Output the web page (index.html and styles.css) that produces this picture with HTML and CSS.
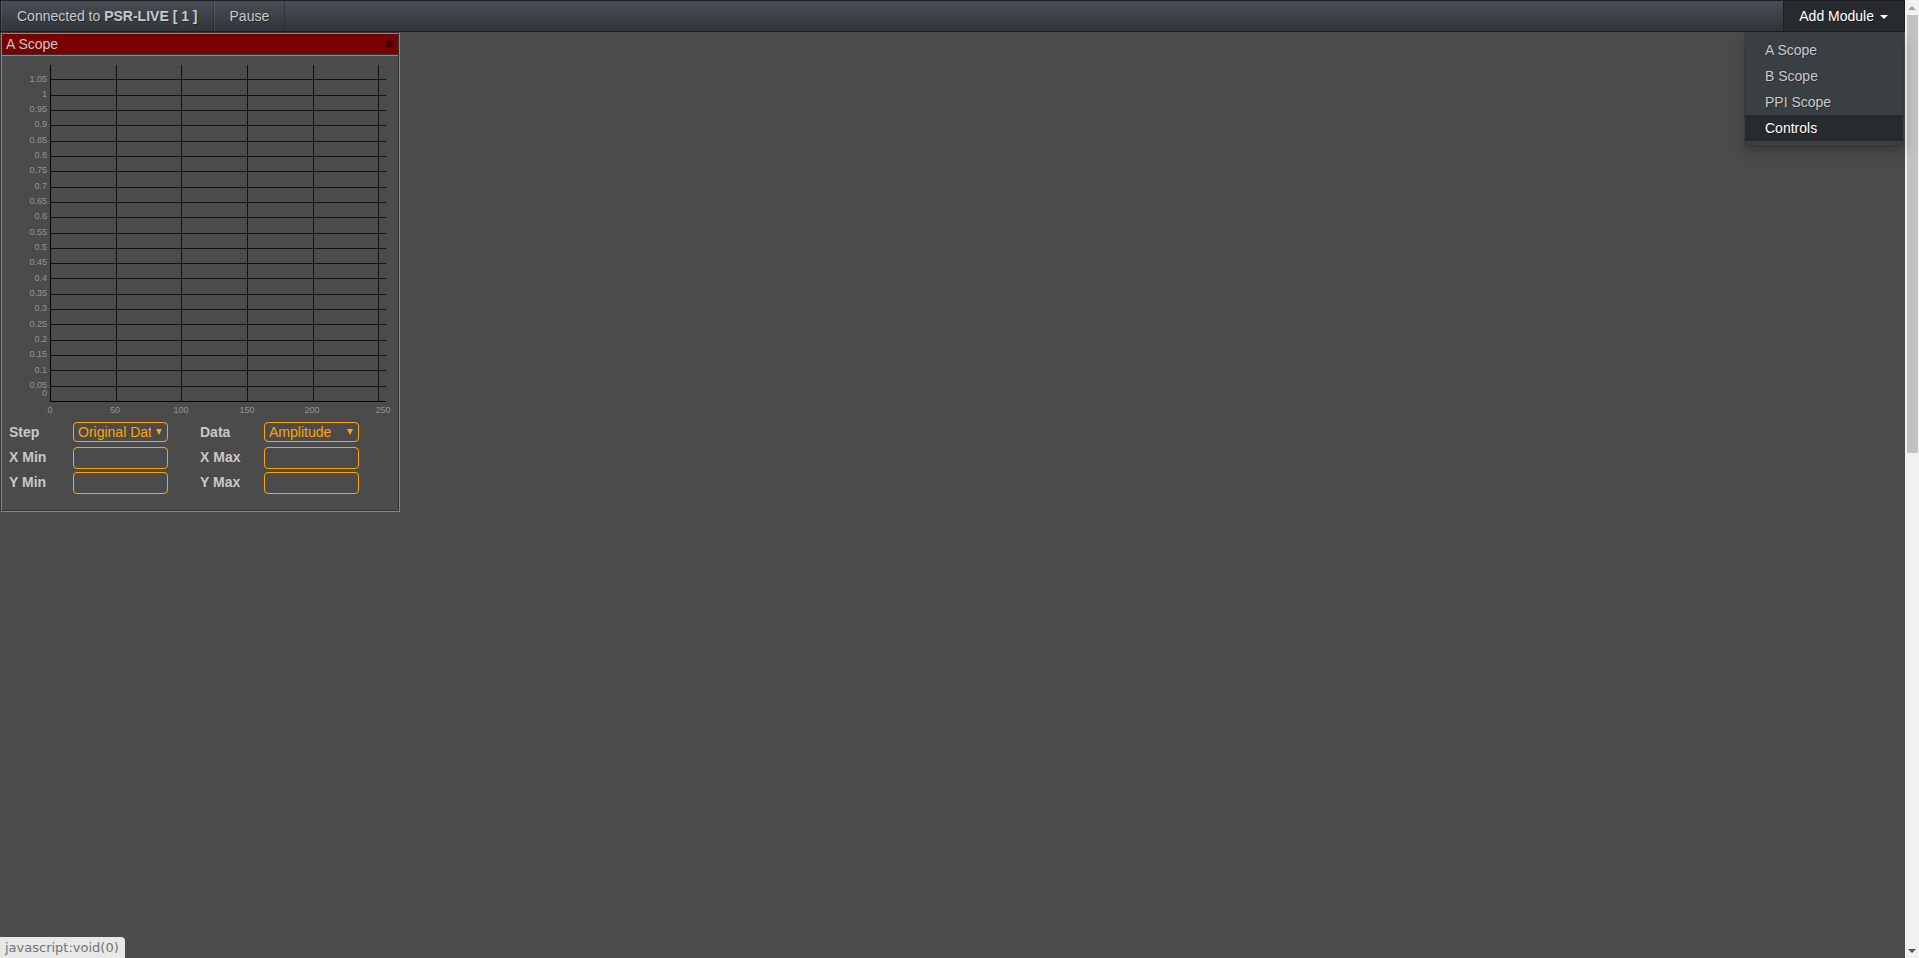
FILE: index.html
```html
<!DOCTYPE html>
<html lang="en">
<head>
    <meta charset="UTF-8">
    <meta name="viewport" content="width=device-width, initial-scale=1.0">
    <title>PSR-LIVE</title>
    <link rel="stylesheet" href="styles.css">
</head>
<body>
    <div class="page">
        <!-- Top bar -->
        <nav class="navbar">
            <a class="navbar-brand" href="javascript:void(0)">Connected to <b>PSR-LIVE [ 1 ]</b></a>
            <button class="nav-button" type="button">Pause</button>
            <div class="dropdown">
                <button class="dropdown-toggle" type="button">Add Module <span class="caret"></span></button>
                <div class="dropdown-menu">
                    <a href="javascript:void(0)">A Scope</a>
                    <a href="javascript:void(0)">B Scope</a>
                    <a href="javascript:void(0)">PPI Scope</a>
                    <a class="active" href="javascript:void(0)">Controls</a>
                </div>
            </div>
        </nav>

        <!-- A Scope module -->
        <section class="module">
            <header class="module-title">
                <span>A Scope</span>
                <button class="close" type="button" aria-label="Close">
                    <svg width="10" height="10" viewBox="0 0 10 10"><path d="M1.500 1.500L8.500 8.500M8.500 1.500L1.500 8.500" stroke="#400000" stroke-width="2.6"/></svg>
                </button>
            </header>
            <svg class="chart" viewBox="0 0 396 364">
                <path class="grid" d="M48 23.5H384M48 39.5H384M48 54.5H384M48 69.5H384M48 85.5H384M48 100.5H384M48 115.5H384M48 131.5H384M48 146.5H384M48 161.5H384M48 177.5H384M48 192.5H384M48 207.5H384M48 222.5H384M48 238.5H384M48 253.5H384M48 268.5H384M48 284.5H384M48 299.5H384M48 314.5H384M48 330.5H384"/>
                <path class="grid" d="M114.500 9V345M179.500 9V345M245.500 9V345M311.500 9V345M376.500 9V345"/>
                <path class="axis" d="M48.500 9V345.500H384"/>
                <g class="y-labels">
                    <text x="45" y="26">1.05</text>
                    <text x="45" y="41">1</text>
                    <text x="45" y="56">0.95</text>
                    <text x="45" y="71">0.9</text>
                    <text x="45" y="87">0.85</text>
                    <text x="45" y="102">0.8</text>
                    <text x="45" y="117">0.75</text>
                    <text x="45" y="133">0.7</text>
                    <text x="45" y="148">0.65</text>
                    <text x="45" y="163">0.6</text>
                    <text x="45" y="179">0.55</text>
                    <text x="45" y="194">0.5</text>
                    <text x="45" y="209">0.45</text>
                    <text x="45" y="225">0.4</text>
                    <text x="45" y="240">0.35</text>
                    <text x="45" y="255">0.3</text>
                    <text x="45" y="271">0.25</text>
                    <text x="45" y="286">0.2</text>
                    <text x="45" y="301">0.15</text>
                    <text x="45" y="317">0.1</text>
                    <text x="45" y="332">0.05</text>
                    <text x="45" y="340">0</text>
                </g>
                <g class="x-labels">
                    <text x="48" y="357">0</text>
                    <text x="113" y="357">50</text>
                    <text x="179" y="357">100</text>
                    <text x="245" y="357">150</text>
                    <text x="310" y="357">200</text>
                    <text x="381" y="357">250</text>
                </g>
            </svg>
            <form class="settings">
                <label for="step">Step</label>
                <div class="select">
                    <select id="step"><option>Original Data</option></select>
                </div>
                <label for="data">Data</label>
                <div class="select">
                    <select id="data"><option>Amplitude</option></select>
                </div>
                <label for="x-min">X Min</label>
                <input id="x-min" type="text">
                <label for="x-max">X Max</label>
                <input id="x-max" type="text">
                <label for="y-min">Y Min</label>
                <input id="y-min" type="text">
                <label for="y-max">Y Max</label>
                <input id="y-max" type="text">
            </form>
        </section>
    </div>

    <!-- Scrollbar -->
    <div class="scrollbar">
        <span class="arrow-up"></span>
        <div class="track"><div class="thumb"></div></div>
        <span class="arrow-down"></span>
    </div>

    <div class="status">javascript:void(0)</div>
</body>
</html>
```

FILE: styles.css
```css
* { box-sizing: border-box; }
body { display: flex; min-height: 100vh; margin: 0; background: #4b4b4b; color: #c8c8c8; font: 14px/20px "Liberation Sans", Arial, sans-serif; }
button, input, select { font: inherit; }
.page { flex: 1; }

/* Top bar */
.navbar { display: flex; height: 32px; border: 1px solid #1c1e22; background: linear-gradient(#484e55, #3a3f44 60%, #313539); text-shadow: 1px 1px 1px rgba(0,0,0,0.3); }
.navbar-brand, .nav-button { padding: 5px 15px; color: #c8c8c8; text-decoration: none; border: 0; border-right: 1px solid rgba(0,0,0,0.2); }
.navbar-brand { border-left: 1px solid rgba(255,255,255,0.1); }
.nav-button { background: none; border-left: 1px solid rgba(255,255,255,0.1); text-shadow: inherit; cursor: pointer; }
.dropdown { position: relative; margin-left: auto; }
.dropdown-toggle { display: flex; align-items: center; height: 30px; padding: 5px 16px 5px 15px; border: 0; border-left: 1px solid #1c1e22; background: #272b2e; color: #fff; text-shadow: inherit; cursor: pointer; }
.caret { margin: 2px 0 0 6px; border-top: 4px solid #fff; border-left: 4px solid transparent; border-right: 4px solid transparent; }
.dropdown-menu { position: absolute; top: 31px; right: 0; width: 160px; padding: 5px 0; border: 1px solid rgba(0,0,0,0.15); border-top: 0; border-radius: 0 0 4px 4px; background: #3a3f44; background-clip: padding-box; box-shadow: 0 6px 12px rgba(0,0,0,0.18); text-shadow: 1px 1px 1px rgba(0,0,0,0.3); }
.dropdown-menu a { display: block; padding: 3px 20px; color: #c8c8c8; text-decoration: none; }
.dropdown-menu a.active, .dropdown-menu a:hover { background: #272b2e; color: #fff; }

/* Module window */
.module { width: 400px; border: 2px groove #888; }
.module-title { display: flex; justify-content: space-between; align-items: center; height: 22px; padding: 0 3px 0 4px; border-bottom: 2px groove #888; background: #780000; }
.close { display: flex; padding: 0; border: 0; background: none; cursor: pointer; }
.chart { display: block; width: 100%; }
.grid, .axis { fill: none; stroke: #111; stroke-width: 1; }
.axis { stroke: #000; }
.y-labels, .x-labels { fill: #949494; font-size: 9px; }
.y-labels { text-anchor: end; }
.x-labels { text-anchor: middle; }

/* Module settings */
.settings { display: grid; grid-template-columns: 64px 127px 64px 127px; grid-auto-rows: 25px; align-items: center; padding: 0 7px 15px; }
.settings label { padding-bottom: 2px; font-weight: bold; }
.settings input, .select { width: 95px; color: orange; }
.settings input { height: 22px; padding: 0 4px; border: 1px solid orange; border-radius: 4px; background: transparent; }
.select { position: relative; height: 20px; margin-bottom: 2px; }
.select select { display: block; width: 100%; height: 20px; padding: 0 16px 0 4px; border: 1px solid orange; border-radius: 4px; background: transparent; color: orange; line-height: 18px; appearance: none; }
.select::after { content: ""; position: absolute; top: 7px; right: 6px; border-top: 6px solid orange; border-left: 3px solid transparent; border-right: 3px solid transparent; pointer-events: none; }

/* Scrollbar */
.scrollbar { display: flex; flex-direction: column; align-items: center; width: 14px; background: #f1f1f1; }
.track { flex: 1; width: 11px; margin: 5px 0 9px; }
.thumb { height: 47.4%; background: #c1c1c1; }
.arrow-up, .arrow-down { border-left: 4px solid transparent; border-right: 4px solid transparent; }
.arrow-up { margin-top: 6px; border-bottom: 4px solid #a3a3a3; }
.arrow-down { margin-bottom: 5px; border-top: 4px solid #505050; }

/* Link target bubble */
.status { position: fixed; bottom: 0; left: 0; height: 21px; padding: 0 6px 0 5px; border-radius: 0 4px 0 0; background: #e8e8e6; color: #6e7678; font: 13px/21px "DejaVu Sans", sans-serif; }
```
